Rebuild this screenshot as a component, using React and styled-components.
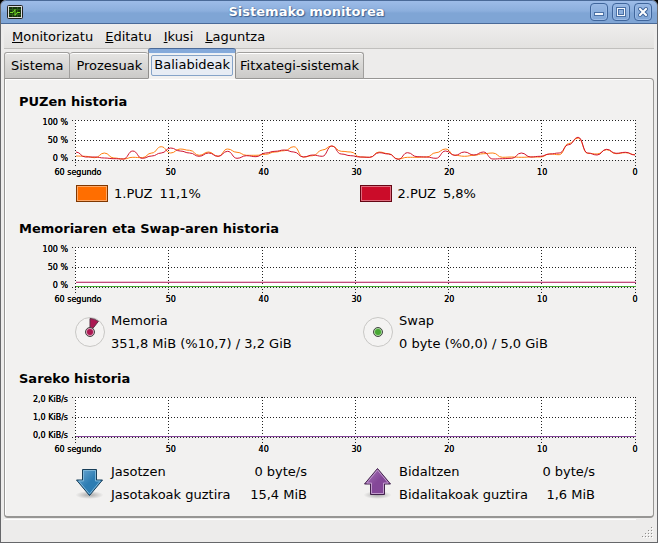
import React from "react";
import styled, { createGlobalStyle } from "styled-components";

const GlobalStyle = createGlobalStyle`
  * { box-sizing: border-box; }
  body {
    margin: 0;
    background: #000;
    color: #000;
    font: 13px/16px "DejaVu Sans", sans-serif;
  }
`;

const Window = styled.div`
  min-height: 100vh;
  display: flex;
  flex-direction: column;
  background: #edeceb;
  border: solid #66676a;
  border-width: 0 1px 1px;
  border-radius: 6px 6px 0 0;
  overflow: hidden;
`;

const TitleBar = styled.header`
  display: flex;
  align-items: center;
  gap: 4px;
  height: 24px;
  margin: 0 -1px;
  padding: 0 5px 0 6px;
  background: linear-gradient(#9dbce8, #8cafdd 45%, #7fa5d5 55%, #7fa5d5);
  border: 1px solid #4a6a98;
  border-radius: 6px 6px 0 0;
`;

const Title = styled.h1`
  flex: 1;
  margin: 0;
  text-align: center;
  font-size: 13px;
  line-height: 16px;
  color: #fff;
  text-shadow: 1px 1px 1px #3d5f90, 0 0 1px #3d5f90;
`;

const TitleButton = styled.button`
  display: flex;
  width: 18px;
  height: 18px;
  padding: 0;
  align-items: center;
  justify-content: center;
  border: 1px solid #3f659b;
  border-radius: 4px;
  background: linear-gradient(#98b8e4, #7fa5d5);
  box-shadow: inset 0 0 0 1px #9bbbe6;
`;

const MenuBar = styled.nav`
  display: flex;
  gap: 12px;
  height: 25px;
  margin: 0 3px;
  padding: 3px 7px 2px 8px;
  background: linear-gradient(#efeeed, #e3e2e0);
  border-bottom: 1px solid #c0bfbd;
`;

const MenuItem = styled.button`
  padding: 0;
  border: 0;
  background: none;
  color: inherit;
  font: inherit;
`;

const TabBar = styled.div`
  display: flex;
  align-items: flex-end;
  height: 30px;
  margin: 0 3px -1px;
`;

const Tab = styled.button`
  position: relative;
  height: ${(p) => (p.$active ? 30 : 27)}px;
  padding: 0 ${(p) => p.$pad}px;
  border: 1px solid ${(p) => (p.$active ? "#8f8e8c" : "#a09f9d")};
  border-left-width: ${(p) => (p.$first || p.$active ? 1 : 0)}px;
  border-right-width: ${(p) => (p.$beforeActive ? 0 : 1)}px;
  border-top: ${(p) => (p.$active ? "4px solid #84a9da" : "1px solid #a09f9d")};
  border-bottom-color: ${(p) => (p.$active ? "#f2f1f0" : "#979694")};
  border-radius: 3px 3px 0 0;
  background: ${(p) => (p.$active ? "#f2f1f0" : "linear-gradient(#e6e5e3, #cbcac8)")};
  box-shadow: ${(p) => (p.$active ? "inset 0 1px #e9f0f9, 0 -1px #4a6a98" : "inset 0 1px #fff")};
  color: inherit;
  font: inherit;
  white-space: nowrap;
`;

const TabFocus = styled.span`
  display: block;
  padding: 1px 2px 2px;
  border: 1px solid #85a3c8;
  border-radius: 2px;
  background: #e7ecf4;
`;

const Panel = styled.main`
  flex: 1;
  margin: 0 3px;
  padding: 15px 18px 8px 14px;
  border: 1px solid #979694;
  border-bottom-width: 2px;
  border-radius: 0 4px 4px 4px;
  background: #f2f1f0;
  box-shadow: inset 1px 1px #fff;
`;

const Section = styled.section`
  margin-bottom: ${(p) => p.$gap || 0}px;
`;

const Heading = styled.h2`
  margin: 0 0 6px;
  font-size: 13px;
  line-height: 16px;
`;

const Chart = styled.div`
  display: grid;
  grid-template-columns: 49px 1fr;
  column-gap: 7px;
  font-size: 8px;
  line-height: 12px;
  text-shadow: 0 0 #000;
`;

const YLabels = styled.div`
  display: flex;
  flex-direction: column;
  justify-content: space-between;
  height: 48px;
  margin-top: 1px;
  text-align: right;
  white-space: nowrap;
`;

const Plot = styled.svg`
  display: block;
  width: 100%;
  height: 46px;
  margin-top: 4px;
  overflow: visible;
`;

const XLabels = styled.div`
  grid-column: 2;
  display: flex;
  justify-content: space-between;
  margin-top: 1px;
  padding-left: 3px;
`;

const XLabel = styled.span`
  display: flex;
  justify-content: center;
  width: 0;
  white-space: nowrap;
`;

const Legend = styled.div`
  display: grid;
  grid-template-columns: 1fr 1fr;
  column-gap: ${(p) => (p.$wide ? 16 : 8)}px;
  margin: ${(p) => p.$top}px 0 0 ${(p) => (p.$wide ? 56 : 57)}px;
`;

const LegendItem = styled.div`
  display: flex;
  align-items: center;
  gap: 6px;
`;

const Swatch = styled.button`
  width: 32px;
  height: 17px;
  padding: 0;
  border: 1px solid ${(p) => p.$edge};
  background: ${(p) => p.$color};
  box-shadow: inset 0 0 0 1px ${(p) => p.$shine};
`;

const Value = styled.span`
  margin-left: 1px;
`;

const Lines = styled.div`
  line-height: 23px;
`;

const Stats = styled.dl`
  display: grid;
  grid-template-columns: auto auto;
  justify-content: space-between;
  width: 196px;
  margin: 0;
  line-height: 23px;
  white-space: nowrap;
`;

const StatValue = styled.dd`
  margin: 0;
  text-align: right;
`;

const StatusBar = styled.footer`
  display: flex;
  justify-content: flex-end;
  align-items: flex-end;
  gap: 6px;
  height: 24px;
  margin: 0 3px;
  padding: 0 1px 4px 0;
`;

const StatusLine = styled.div`
  flex: 1;
  align-self: stretch;
  margin-top: 1px;
  border-top: 1px solid #fff;
`;

const CPU1 = [36, 36.3, 37.7, 33, 38, 39, 37.3, 37.7, 33, 26.7, 33, 29, 30.3, 35.3, 32, 36.3, 29, 32.3, 35.3, 35.3, 34.3, 32, 30.7, 26.7, 37, 35.7, 30, 26, 31.3, 32, 37, 37.3, 32, 33.7, 39, 37.3, 37.3, 37, 32.7, 29, 35.3, 36.3, 35.3, 33.7, 33, 37.3, 37, 37.3, 37, 37, 34, 34.7, 23.7, 18, 33.3, 34, 29.7, 33.7, 32.7, 34.7];
const CPU2 = [32, 37, 37, 38, 38.7, 39, 31, 38.3, 36, 33, 28, 31, 33, 36.3, 33, 36.3, 31.3, 38.3, 35.7, 36.7, 33, 31.3, 30, 32, 37, 35, 36.3, 26, 34, 35.7, 37, 37.3, 32.7, 34, 39.3, 32.7, 36.7, 37, 38.3, 31, 35.3, 32, 35, 32, 39, 38.7, 38.3, 33, 37, 36.3, 34, 33, 24.7, 17.3, 33, 35, 29.3, 33.3, 32.3, 35];

const smoothPath = (values) =>
  values
    .map((y, i) => {
      const x = i * 10;
      return i === 0 ? `M0 ${y}` : `C${x - 5} ${values[i - 1]} ${x - 5} ${y} ${x} ${y}`;
    })
    .join("");

const TICKS = ["60 segundo", "50", "40", "30", "20", "10", "0"];

function History({ labels, curves = [], levels = [] }) {
  return (
    <Chart>
      <YLabels>
        {labels.map((l) => <span key={l}>{l}</span>)}
      </YLabels>
      <Plot aria-hidden="true">
        <rect width="100%" height="40" fill="#fff" />
        <g stroke="#222" strokeDasharray="1 2" shapeRendering="crispEdges">
          {[0.5, 20.5, 40.5].map((y) => <line key={y} x1="-3" x2="100%" y1={y} y2={y} />)}
          {TICKS.map((t, i) => {
            const x = `${(i * 559.5 / 6 + 0.5) / 5.6}%`;
            return <line key={t} x1={x} x2={x} y1="0" y2="46" />;
          })}
        </g>
        <svg y="0" width="100%" height="46" viewBox="-1 0 591 46" preserveAspectRatio="none">
          {curves.map((c) => (
            <path key={c.color} d={smoothPath(c.values)} fill="none" stroke={c.color} strokeWidth="1" vectorEffect="non-scaling-stroke" />
          ))}
        </svg>
        {levels.map((l) => (
          <rect key={l.y} x="1" y={l.y} width="100%" height="1" fill={l.color} />
        ))}
      </Plot>
      <XLabels>
        {TICKS.map((t) => <XLabel key={t}>{t}</XLabel>)}
      </XLabels>
    </Chart>
  );
}

const AppIcon = () => (
  <svg width="16" height="16" viewBox="0 0 16 16" aria-hidden="true">
    <rect x=".5" y="1.5" width="15" height="13" rx="1" fill="#ddd" stroke="#222" />
    <rect x="2" y="3" width="12" height="10" fill="#17320e" />
    <path d="M2 5.5h12M2 10.5h12M5.5 3v10M10.5 3v10" stroke="#2b5b18" />
    <path d="M3 8.500h3l2-3v6l2-3h3" fill="none" stroke="#79e02a" />
  </svg>
);

const Gauge = ({ color, ring, wedge }) => (
  <svg width="30" height="30" viewBox="0 0 30 30" aria-hidden="true">
    <circle cx="15" cy="15" r="14.500" fill="#f4f3f2" stroke="#c8c7c5" />
    {wedge && <path d="M15 15V1.500A13.500 13.500 0 0 1 23.400 4.400Z" fill={color} stroke="#5d3346" />}
    <circle cx="15" cy="15" r="4.500" fill={ring} stroke="#454545" />
    <circle cx="15" cy="15" r="3" fill={color} />
  </svg>
);

const Arrow = ({ up, id, light, mid, dark, shine }) => (
  <svg width="30" height="32" viewBox="0 0 30 32" aria-hidden="true">
    <defs>
      <linearGradient id={id} x1="0" y1={up ? "1" : "0"} x2="1" y2={up ? "0" : "1"}>
        <stop offset="0" stopColor={light} />
        <stop offset=".5" stopColor={mid} />
        <stop offset="1" stopColor={mid} />
      </linearGradient>
      <radialGradient id={`${id}-shadow`}>
        <stop offset="0" stopColor="#000" stopOpacity=".3" />
        <stop offset="1" stopColor="#000" stopOpacity="0" />
      </radialGradient>
    </defs>
    <ellipse cx="14.500" cy="28" rx="14" ry="4" fill={`url(#${id}-shadow)`} />
    <g transform={up ? "translate(0 30) scale(1 -1)" : undefined}>
      <path d="M7.500 2.500h14v10.500h6L14.500 28.500 1.500 13h6Z" fill={`url(#${id})`} stroke={dark} />
      <path d="M8.500 3.500h12v10.500h4.800L14.500 27 3.700 14h4.800Z" fill="none" stroke={shine} />
    </g>
  </svg>
);

const Grip = () => (
  <svg width="11" height="11" viewBox="0 0 11 11" aria-hidden="true">
    {[[9, 0], [6, 3], [9, 3], [3, 6], [6, 6], [9, 6], [0, 9], [3, 9], [6, 9], [9, 9]].map(([x, y]) => (
      <g key={`${x}-${y}`}>
        <rect x={x + 1} y={y + 1} width="1" height="1" fill="#fff" />
        <rect x={x} y={y} width="1" height="1" fill="#8d8c8a" />
      </g>
    ))}
  </svg>
);

const PERCENT = ["100 %", "50 %", "0 %"];
const MENUS = ["Monitorizatu", "Editatu", "Ikusi", "Laguntza"];

export default function App() {
  return (
    <>
      <GlobalStyle />
      <Window>
        <TitleBar>
          <AppIcon />
          <Title>Sistemako monitorea</Title>
          <TitleButton aria-label="Minimizatu">
            <svg width="10" height="10">
              <rect y="5" width="10" height="4" fill="#4a70a5" />
              <rect x="1" y="6" width="8" height="2" fill="#f4f8fd" />
            </svg>
          </TitleButton>
          <TitleButton aria-label="Maximizatu">
            <svg width="10" height="10">
              <rect width="10" height="10" fill="#4a70a5" />
              <rect x="1" y="1" width="8" height="8" fill="#f4f8fd" />
              <rect x="2" y="2" width="6" height="6" fill="#4a70a5" />
              <rect x="3" y="3" width="4" height="4" fill="#8cafdd" />
            </svg>
          </TitleButton>
          <TitleButton aria-label="Itxi">
            <svg width="10" height="10">
              <path d="M2 2l6 6M8 2l-6 6" stroke="#3f659b" strokeWidth="4" strokeLinecap="square" />
              <path d="M2 2l6 6M8 2l-6 6" stroke="#fff" strokeWidth="2" strokeLinecap="square" />
            </svg>
          </TitleButton>
        </TitleBar>
        <MenuBar>
          {MENUS.map((m) => (
            <MenuItem key={m}><u>{m[0]}</u>{m.slice(1)}</MenuItem>
          ))}
        </MenuBar>
        <TabBar role="tablist">
          <Tab role="tab" $pad={6} $first>Sistema</Tab>
          <Tab role="tab" $pad={6} $beforeActive>Prozesuak</Tab>
          <Tab role="tab" $pad={2} aria-selected="true" $active><TabFocus>Baliabideak</TabFocus></Tab>
          <Tab role="tab" $pad={4}>Fitxategi-sistemak</Tab>
        </TabBar>
        <Panel>
          <Section $gap={19}>
            <Heading>PUZen historia</Heading>
            <History labels={PERCENT} curves={[{ color: "#ff7f10", values: CPU1 }, { color: "#d0142f", values: CPU2 }]} />
            <Legend $top={6}>
              <LegendItem>
                <Swatch aria-label="1.PUZ kolorea" $color="#ff6e00" $edge="#803700" $shine="#ffa866" />
                <span>1.PUZ</span><Value>11,1%</Value>
              </LegendItem>
              <LegendItem>
                <Swatch aria-label="2.PUZ kolorea" $color="#cb0c29" $edge="#650614" $shine="#e06d7f" />
                <span>2.PUZ</span><Value>5,8%</Value>
              </LegendItem>
            </Legend>
          </Section>
          <Section $gap={16}>
            <Heading>Memoriaren eta Swap-aren historia</Heading>
            <History
              labels={PERCENT}
              levels={[{ y: 34, color: "#f0c4d5" }, { y: 35, color: "#c04a7c" }, { y: 39, color: "#49a835" }]}
            />
            <Legend $wide $top={3}>
              <LegendItem>
                <Gauge color="#ab1852" ring="#dda0b9" wedge />
                <Lines>Memoria<br />351,8 MiB (%10,7) / 3,2 GiB</Lines>
              </LegendItem>
              <LegendItem>
                <Gauge color="#49a835" ring="#a8d89d" />
                <Lines>Swap<br />0 byte (%0,0) / 5,0 GiB</Lines>
              </LegendItem>
            </Legend>
          </Section>
          <Section>
            <Heading>Sareko historia</Heading>
            <History labels={["2,0 KiB/s", "1,0 KiB/s", "0,0 KiB/s"]} levels={[{ y: 39, color: "#844798" }]} />
            <Legend $wide $top={4}>
              <LegendItem>
                <Arrow id="down" light="#75add7" mid="#2d7db3" dark="#173d58" shine="#7db6d8" />
                <Stats>
                  <dt>Jasotzen</dt><StatValue>0 byte/s</StatValue>
                  <dt>Jasotakoak guztira</dt><StatValue>15,4 MiB</StatValue>
                </Stats>
              </LegendItem>
              <LegendItem>
                <Arrow up id="up" light="#ad7cbc" mid="#844798" dark="#42234c" shine="#c19bcc" />
                <Stats>
                  <dt>Bidaltzen</dt><StatValue>0 byte/s</StatValue>
                  <dt>Bidalitakoak guztira</dt><StatValue>1,6 MiB</StatValue>
                </Stats>
              </LegendItem>
            </Legend>
          </Section>
        </Panel>
        <StatusBar><StatusLine /><Grip /></StatusBar>
      </Window>
    </>
  );
}
